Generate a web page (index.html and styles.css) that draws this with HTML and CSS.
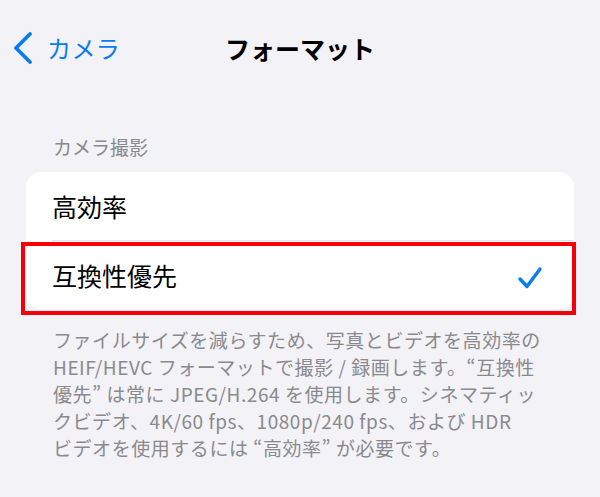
FILE: index.html
```html
<!DOCTYPE html>
<html lang="ja">
<head>
<meta charset="utf-8">
<title>フォーマット</title>
<link rel="stylesheet" href="styles.css">
</head>
<body>
<header class="nav">
  <a class="back" href="#">
    <svg class="chev" width="20" height="32" viewBox="0 0 20 32"><polyline points="17,2 3,16 17,30" fill="none" stroke="#0a7cf2" stroke-width="3.8" stroke-linecap="round" stroke-linejoin="round"/></svg>
    <span class="back-label">カメラ</span>
  </a>
  <h1 class="title">フォーマット</h1>
  <span class="spacer"></span>
</header>
<main class="section">
  <div class="section-header">カメラ撮影</div>
  <div class="card">
    <div class="row row-first"><span class="row-label">高効率</span></div>
    <div class="row row-selected"><span class="row-label">互換性優先</span>
      <svg class="check" width="26" height="24" viewBox="0 0 26 24"><polyline points="3,13 10,20.5 23,3" fill="none" stroke="#0a7cf2" stroke-width="3.4" stroke-linecap="round" stroke-linejoin="round"/></svg>
    </div>
  </div>
  <p class="footer">
    <span class="line">ファイルサイズを減らすため、写真とビデオを高効率の</span>
    <span class="line">HEIF/HEVC フォーマットで撮影 / 録画します。“互換性</span>
    <span class="line">優先” は常に JPEG/H.264 を使用します。シネマティッ</span>
    <span class="line">クビデオ、4K/60 fps、1080p/240 fps、および HDR</span>
    <span class="line">ビデオを使用するには “高効率” が必要です。</span>
  </p>
</main>
</body>
</html>
```
FILE: styles.css
```css
html, body {
  margin: 0;
  padding: 0;
  background: #f2f2f7;
  width: 600px;
  height: 497px;
  overflow: hidden;
  font-family: "Noto Sans CJK JP", "Noto Sans", sans-serif;
  color: #000;
}

.nav {
  height: 96px;
  display: grid;
  grid-template-columns: 1fr auto 1fr;
  align-items: center;
  padding: 0 14px;
  box-sizing: border-box;
}

.back {
  display: flex;
  align-items: center;
  gap: 14px;
  text-decoration: none;
  color: #0a7cf2;
}

.chev {
  display: block;
  margin-left: -1px;
}

.back-label {
  font-size: 24px;
  line-height: 30px;
  letter-spacing: 0.4px;
}

.title {
  margin: 0;
  font-size: 25px;
  font-weight: 700;
  line-height: 30px;
  letter-spacing: 0;
}

.section {
  padding: 0 26px;
}

.section-header {
  margin-top: 38px;
  padding-left: 27px;
  font-size: 19px;
  line-height: 26px;
  color: #8a8a8e;
}

.card {
  margin-top: 12px;
  background: #fff;
  border-radius: 15px;
}

.row {
  height: 68px;
  display: flex;
  align-items: center;
  justify-content: space-between;
  padding: 0 31px 0 26px;
  position: relative;
}

.row-first {
  border-bottom: 1px solid #e0e0e5;
  margin-left: 26px;
  padding-left: 0;
}

.row-label {
  font-size: 25px;
  line-height: 32px;
  letter-spacing: 0;
}

.row-selected::after {
  content: "";
  position: absolute;
  left: -5px;
  right: -2px;
  top: 1px;
  bottom: -6px;
  border: 4px solid #f5000a;
}

.check {
  display: block;
  margin-top: 6px;
}

.footer {
  margin: 17px 0 0;
  padding-left: 27px;
  font-size: 19px;
  line-height: 27px;
  color: #8a8a8e;
  letter-spacing: 0.55px;
}

.line {
  display: block;
  white-space: nowrap;
}
```
